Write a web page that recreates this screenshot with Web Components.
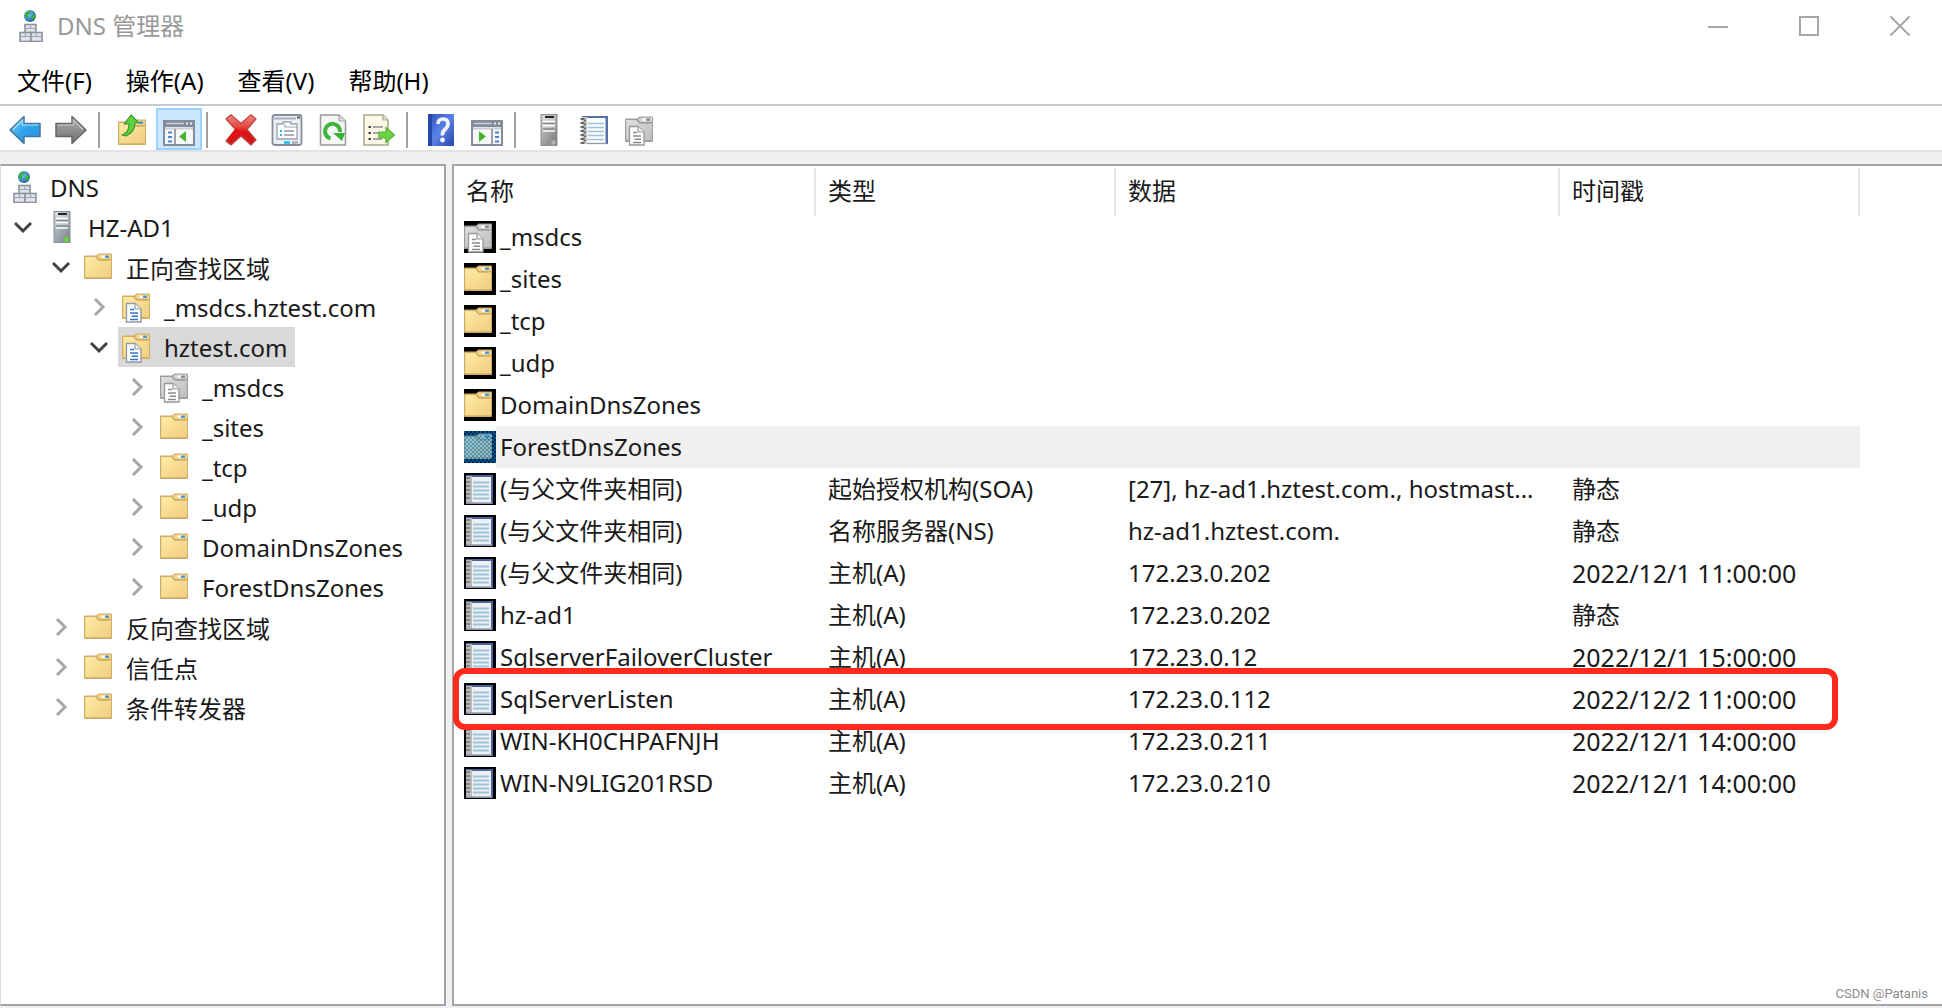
<!DOCTYPE html>
<html lang="zh-CN">
<head>
<meta charset="utf-8">
<title>DNS 管理器</title>
<style>
  html, body { margin: 0; height: 100%; }
  body {
    background: #fff;
    font-family: "Noto Sans", "Noto Sans CJK SC", sans-serif;
    font-size: 24px;
    color: #1a1a1a;
  }
</style>
</head>
<body>
<dns-window>
  <title-bar slot="title">DNS 管理器</title-bar>
  <menu-bar slot="menu"></menu-bar>
  <tool-bar slot="tools"></tool-bar>
  <scope-tree slot="tree"></scope-tree>
  <record-list slot="list"></record-list>
  <span slot="mark">CSDN @Patanis</span>
</dns-window>

<script>
const FOLDER = (a, b, c, edge, dot) => `
  <linearGradient id="f" x1="0" y1="0" x2="1" y2="1"><stop offset="0" stop-color="${a}"/><stop offset="1" stop-color="${b}"/></linearGradient>
  <path d="M0 5.500q0-1 1-1H12l2.500-2H27q1 0 1 1V27q0 1-1 1H1q-1 0-1-1z" fill="${edge}"/>
  <path d="M13 5l2-1.500H27V8H15z" fill="${c}"/>
  <rect x="17" y="4.500" width="7" height="2.500" rx="1" fill="#fff" opacity=".8"/>
  <rect x="21" y="4.500" width="4" height="2.500" rx="1" fill="${dot}"/>
  <path d="M1.200 6H11.500l3 3.500H25l2-1V26.500H1.200z" fill="url(#f)"/>
  <path d="M11.500 5.500l3 3.500H25l2-1" fill="none" stroke="${edge}" stroke-width="1"/>
  <path d="M1 27.300H27" stroke="${edge}" stroke-width="1.400"/>`;
const SHEET = (edge, ink) => `
  <path d="M4.500 12.500H13L19 18V31H4.500z" fill="#fff" stroke="${edge}" stroke-width="1.300"/>
  <path d="M13 12.500V18H19" fill="#eef1f5" stroke="${edge}" stroke-width="1.200"/>
  <path d="M8 18.500H12M8 22H16M9.500 25.300H16M8 28.500H16" stroke="${ink}" stroke-width="1.600"/>`;
const YELLOW = FOLDER('#ffeaa4', '#f0cd80', '#f1d287', '#cfac66', '#3f97d6');
const GREY = FOLDER('#e0e0e0', '#bcbcbc', '#d2d2d2', '#9c9c9c', '#8a8a8a');
const SERVER = (lamp, a, b) => `
  <linearGradient id="s" x1="0" y1="0" x2="1" y2="1"><stop offset="0" stop-color="${a}"/><stop offset="1" stop-color="${b}"/></linearGradient>
  <rect x="8" y=".5" width="16" height="31" fill="url(#s)" stroke="#8b9196" stroke-width="1"/>
  <rect x="9.500" y="1.500" width="13" height="14" fill="#fff" opacity=".35"/>
  <path d="M12 3H21" stroke="#222" stroke-width="2"/>
  <path d="M10 9.500H22M10 15H22" stroke="#84898d" stroke-width="1.500"/>
  <path d="M10 7.500H22M10 11.500H22M10 17H22" stroke="#fff" stroke-width="1.600"/>
  <rect x="18.500" y="26.500" width="4" height="4" fill="${lamp}"/>`;
const PANE = inner => `
  <rect x="1" y="7" width="30" height="24" fill="#f6f7f8" stroke="#858c99" stroke-width="2"/>
  <rect x="1" y="6" width="30" height="7" fill="#858c99"/>
  <path d="M3 9.500H21" stroke="#c9ced6" stroke-width="1.500"/>
  <path d="M23 9.500h2M27 9.500h2" stroke="#e8ecf2" stroke-width="2"/>
  <path d="M2 14.500H30" stroke="#c9ced6" stroke-width="2"/>${inner}`;
const BOX = (x, y) => `<rect x="${x}" y="${y}" width="11" height="9" fill="#dfe3ec" stroke="#8c919c" stroke-width="1.600"/><path d="M${x + 1} ${y + 4}h9M${x + 5.5} ${y + 1}v3" stroke="#9da3b0" stroke-width="1.200"/>`;

const ICONS = {
  network: `<radialGradient id="g" cx=".4" cy=".35" r=".7"><stop offset="0" stop-color="#7cc7f5"/><stop offset="1" stop-color="#1659ad"/></radialGradient>
    <circle cx="16" cy="6" r="6" fill="url(#g)"/>
    <path d="M11 4q2-3 5-3l1 2-3 2 0 3-3-1zM18 5l3-1 .5 3-2.500 3-2-2zM14 9l2 2-2 0z" fill="#3cae3b"/>
    ${BOX(11, 14.500)}${BOX(6, 22.500)}${BOX(17, 22.500)}`,
  server: SERVER('#62e01b', '#c9d2d6', '#75838a'),
  serverGrey: SERVER('#b5b5b5', '#d0d0d0', '#777'),
  folder: YELLOW,
  zone: YELLOW + SHEET('#8e98a6', '#3674c4'),
  zoneGrey: GREY + SHEET('#979797', '#8a8a8a'),
  record: `<rect x="3" y="2" width="26" height="28" fill="#566fa9"/>
    <rect x="4" y="4" width="22.500" height="26" fill="#fbfcfd"/>
    <rect x="3" y="3" width="5" height="27" fill="#c9c9c9"/>
    <path d="M8.500 9.500H25M8.500 13.500H25M8.500 17.500H25M8.500 21.500H25M8.500 25.500H25" stroke="#9cc3da" stroke-width="1.700"/>
    <path d="M8 29.500H28" stroke="#8d97ab" stroke-width="1.300"/>
    <path d="M1.500 5h4M1.500 9h4M1.500 13h4M1.500 17h4M1.500 21h4M1.500 25h4M1.500 29h4" stroke="#686868" stroke-width="2"/>
    <path d="M5 6.500h2M5 10.500h2M5 14.500h2M5 18.500h2M5 22.500h2M5 26.500h2" stroke="#666" stroke-width="1.300"/>`,
  recordMatte: `<rect x="2" y="2" width="27" height="29" fill="#4c639c"/>
    <rect x="2" y="4" width="25" height="26" fill="#eef0f3"/>
    <rect x="2" y="3" width="6" height="27" fill="#b9b9b9"/>
    <path d="M9 9.500H25M9 13.500H25M9 17.500H25M9 21.500H25M9 25.500H25" stroke="#9cc3da" stroke-width="2"/>
    <path d="M2 30H28" stroke="#9aa0ab" stroke-width="1.500"/>
    <path d="M2 5h4M2 9h4M2 13h4M2 17h4M2 21h4M2 25h4" stroke="#777" stroke-width="1.600"/>`,
  back: `<linearGradient id="b" x1="0" y1="0" x2="1" y2="1"><stop offset="0" stop-color="#7fd4fb"/><stop offset=".5" stop-color="#2fa3ea"/><stop offset="1" stop-color="#2b8fd8"/></linearGradient>
    <path d="M1 16L15 2.500V9.500H31V22.500H15V29.500z" fill="url(#b)" stroke="#41749f" stroke-width="1.500" stroke-linejoin="round"/>
    <path d="M4 15.500L13.500 6V11H29.500" fill="none" stroke="#a5e1fc" stroke-width="1.200"/>`,
  forward: `<linearGradient id="w" x1="0" y1="0" x2="0" y2="1"><stop offset="0" stop-color="#b0b0b0"/><stop offset="1" stop-color="#6f6f6f"/></linearGradient>
    <path d="M31 16L17 2.500V9.500H1V22.500H17V29.500z" fill="url(#w)" stroke="#666" stroke-width="1.500" stroke-linejoin="round"/>
    <path d="M2.500 11H18.500V6L28 15.500" fill="none" stroke="#c6c6c6" stroke-width="1.200"/>`,
  up: `<g transform="translate(1 3)">${YELLOW}</g>
    <path d="M5 21q7-2 7-11H7L14 1l8 8h-4q0 9-9 13z" fill="#5fcf3f" stroke="#3c962c" stroke-width="1.200" stroke-linejoin="round"/>`,
  treePane: PANE(`<path d="M12 15V31" stroke="#858c99" stroke-width="1.600"/><path d="M5 18.500h4M5 23h4M5 27.500h4" stroke="#4a86cf" stroke-width="2"/><path d="M23 17V28L16 22.500z" fill="#47b52c"/>`),
  actionPane: PANE(`<path d="M21 15V31" stroke="#858c99" stroke-width="1.600"/><path d="M24 18.500h4M24 23h4M24 27.500h4" stroke="#4a86cf" stroke-width="2"/><path d="M8 17V28L15 22.500z" fill="#47b52c"/>`),
  remove: `<linearGradient id="r" x1="0" y1="0" x2="0" y2="1"><stop offset="0" stop-color="#ee8b84"/><stop offset=".4" stop-color="#e8473f"/><stop offset=".55" stop-color="#e21216"/><stop offset="1" stop-color="#c41a1c"/></linearGradient>
    <path d="M1 5L6 0.800 16 9.500 26 0.800 31 5 22 15.500 31 26 26 31 16 22 6 31 1 27 10.500 15.500z" fill="url(#r)" stroke="#bb4743" stroke-width="1.200" stroke-linejoin="round"/>
    <path d="M12.500 15.500L5 25" stroke="#e21216" stroke-width="4"/>`,
  props: `<rect x="1.500" y="1" width="29" height="30" rx="2.500" fill="#eceff3" stroke="#878e99" stroke-width="1.800"/>
    <path d="M3 4.500H25" stroke="#a9b0bb" stroke-width="2"/><path d="M26 3.500h3" stroke="#555e6c" stroke-width="2"/>
    <path d="M6 10H12V8h8v2h6V25H6z" fill="#fff" stroke="#9ba2ae" stroke-width="1.300"/>
    <path d="M14 10v3h12" fill="none" stroke="#9ba2ae" stroke-width="1.200"/>
    <path d="M9 17h2M9 21h2" stroke="#33b9ea" stroke-width="1.800"/><path d="M13 17h10M13 21h10" stroke="#9096a3" stroke-width="1.500"/>
    <path d="M13 28.500h6" stroke="#19bff0" stroke-width="2.500"/><path d="M21 28.500h6" stroke="#a9b0bb" stroke-width="2.500"/>`,
  refresh: `<path d="M3.500 1H22L28.500 7V31H3.500z" fill="#f5f5f5" stroke="#9a9a9a" stroke-width="1.500"/>
    <path d="M22 1V7H28.500" fill="#ddd" stroke="#a5a5a5" stroke-width="1.200"/>
    <path d="M13.500 24.500A7.500 7.500 0 1 1 23 18" fill="none" stroke="#3cb53a" stroke-width="4"/>
    <path d="M16 19H28L25 27z" fill="#35b034"/>`,
  exportList: `<path d="M1 1H20L25 6V31H1z" fill="#fdf9e6" stroke="#aaa592" stroke-width="1.500"/>
    <path d="M20 1V6H25" fill="#e5e0cb" stroke="#aaa592" stroke-width="1.200"/>
    <path d="M5.500 13h2.500M5.500 19h2.500M5.500 25h2.500" stroke="#444" stroke-width="2"/><path d="M10 13h10M10 19h8M10 25h9" stroke="#8b8999" stroke-width="1.600"/>
    <path d="M16 18h7V13.500L31.500 21 23 28.500V24H16z" fill="#6fd445" stroke="#54b033" stroke-width="1.200"/>`,
  help: `<linearGradient id="h" x1="0" y1="0" x2="1" y2="1"><stop offset="0" stop-color="#2c4fb8"/><stop offset=".5" stop-color="#5b83e6"/><stop offset="1" stop-color="#2845a8"/></linearGradient>
    <rect x="3" y="0" width="26" height="32" fill="url(#h)"/><rect x="3" y="0" width="4" height="32" fill="#2746ae"/>
    <path d="M13 10q0-5 5-5t5 5q0 3-3 5.500t-2.500 6" fill="none" stroke="#f2f5fc" stroke-width="3.600"/>
    <circle cx="17.500" cy="26" r="2.400" fill="#f2f5fc"/>`
};

const define = (tag, css, build) => customElements.define(tag, class extends HTMLElement {
  connectedCallback() {
    if (this.shadowRoot) return;
    const t = document.createElement('template');
    t.innerHTML = `<style>:host,*{box-sizing:border-box}button{font:inherit;color:inherit;border:0;margin:0;padding:0;background:none;display:flex;align-items:center}${css}</style>${build(this)}`;
    this.attachShadow({ mode: 'open' }).append(t.content.cloneNode(true));
  }
});

/* 32px icon; "matte" paints the opaque black backing, "picked" the selection dither */
define('mmc-icon', `
  :host { display: block; flex: none; width: 32px; height: 32px; }
  :host([matte]) { background: #000; }
  svg { display: block; width: 100%; height: 100%; }`,
  el => `<svg viewBox="0 0 32 32" aria-hidden="true">${ICONS[el.getAttribute('name')]}${el.hasAttribute('picked')
    ? '<pattern id="d" width="4" height="4" patternUnits="userSpaceOnUse"><path d="M0 0h2v2H0zM2 2h2v2H2z" fill="#0078d7"/></pattern><rect width="32" height="32" fill="#0078d7" opacity=".3"/><rect width="32" height="32" fill="url(#d)" opacity=".6"/>' : ''}</svg>`);

define('dns-window', `
  :host { display: flex; flex-direction: column; position: relative; min-height: 100vh; background: #f0f0f0; }
  .panes { flex: 1; display: flex; gap: 6px; padding: 12px 0 2px; }
  ::slotted([slot=tree]) { flex: 0 0 446px; }
  ::slotted([slot=list]) { flex: 1; min-width: 0; }
  .mark { position: absolute; right: 14px; bottom: 6px; font: 13px/16px Roboto, sans-serif; color: #8c8c8c; }`,
  () => `<slot name="title"></slot><slot name="menu"></slot><slot name="tools"></slot>
    <main class="panes"><slot name="tree"></slot><slot name="list"></slot></main>
    <div class="mark"><slot name="mark"></slot></div>`);

define('title-bar', `
  :host { display: flex; align-items: center; gap: 11px; height: 52px; padding-left: 14px; background: #fff; color: #999; }
  h1 { flex: 1; margin: 0; font: inherit; line-height: 52px; }
  .controls { display: flex; gap: 7px; }
  .controls button { width: 84px; height: 52px; justify-content: center; }
  svg { width: 22px; height: 22px; fill: none; stroke: #a6a6a6; stroke-width: 2; }`,
  () => {
    const b = (name, d) => `<button type="button" aria-label="${name}"><svg viewBox="0 0 22 22">${d}</svg></button>`;
    return `<mmc-icon name="network"></mmc-icon><h1><slot></slot></h1><div class="controls">
      ${b('最小化', '<path d="M1 12H21"/>')}${b('最大化', '<rect x="2" y="2" width="18" height="18"/>')}${b('关闭', '<path d="M1.500 1.500L20.500 20.500M20.500 1.500L1.500 20.500"/>')}</div>`;
  });

define('menu-bar', `
  :host { display: flex; height: 54px; background: #fff; border-bottom: 2px solid #c8c8c8; color: #000; }
  button { height: 52px; padding: 2px 17px 0; }`,
  () => ['文件(F)', '操作(A)', '查看(V)', '帮助(H)'].map(t => `<button type="button">${t}</button>`).join(''));

define('tool-bar', `
  :host { display: flex; align-items: flex-end; height: 46px; padding-left: 2px; background: #fff; border-bottom: 2px solid #e2e2e2; }
  button { width: 46px; height: 42px; padding-top: 2px; justify-content: center; }
  button[aria-pressed=true] { background: #cce8ff; box-shadow: inset 0 0 0 2px #99d1ff; }
  .sep { width: 2px; height: 36px; margin: 0 10px 2px 4px; background: #a0a0a0; }`,
  () => [['back', '后退'], ['forward', '前进'], 0, ['up', '向上一级'], ['treePane', '显示/隐藏控制台树', 1], 0,
    ['remove', '删除'], ['props', '属性'], ['refresh', '刷新'], ['exportList', '导出列表'], 0,
    ['help', '帮助'], ['actionPane', '显示/隐藏操作窗格'], 0, ['serverGrey', '新建服务器'], ['record', '新建记录'], ['zoneGrey', '新建区域']]
    .map(i => i ? `<button type="button" aria-label="${i[1]}"${i[2] ? ' aria-pressed="true"' : ''}><mmc-icon name="${i[0]}"></mmc-icon></button>` : '<span class="sep"></span>').join(''));

define('tree-node', `
  :host { display: flex; height: 40px; padding-left: calc((var(--level) - 1) * 38px + 8px); }
  :host([level="0"]) { padding-left: 4px; }
  .toggle { width: 34px; padding-left: 6px; }
  .toggle svg { width: 18px; height: 18px; fill: none; stroke: #a6a6a6; stroke-width: 3; }
  .toggle[aria-expanded=true] svg { stroke: #404040; }
  .item { gap: 10px; padding: 0 8px 0 4px; white-space: nowrap; }
  :host([selected]) .item { background: #d9d9d9; }`,
  el => {
    const open = el.hasAttribute('open');
    el.style.setProperty('--level', el.getAttribute('level'));
    return `${el.getAttribute('level') === '0' ? '' : `<button type="button" class="toggle" aria-label="展开或折叠" aria-expanded="${open}"><svg viewBox="0 0 18 18"><path d="${open ? 'M1 5L9 13 17 5' : 'M5 1L13 9 5 17'}"/></svg></button>`}
    <button type="button" class="item"><mmc-icon name="${el.getAttribute('icon')}"></mmc-icon><span><slot></slot></span></button>`;
  });

define('scope-tree', `
  :host { display: block; background: #fff; border: 2px solid #a0a5ad; border-left: 1px solid #dcdcdc; padding-top: 1px; }
  nav { margin-left: -1px; }`,
  () => `<nav>${[[0, 'network', 'DNS'], [1, 'server', 'HZ-AD1', 'open'], [2, 'folder', '正向查找区域', 'open'],
    [3, 'zone', '_msdcs.hztest.com'], [3, 'zone', 'hztest.com', 'open selected'],
    [4, 'zoneGrey', '_msdcs'], [4, 'folder', '_sites'], [4, 'folder', '_tcp'], [4, 'folder', '_udp'],
    [4, 'folder', 'DomainDnsZones'], [4, 'folder', 'ForestDnsZones'],
    [2, 'folder', '反向查找区域'], [2, 'folder', '信任点'], [2, 'folder', '条件转发器']]
    .map(n => `<tree-node level="${n[0]}" icon="${n[1]}" ${n[3] || ''}>${n[2]}</tree-node>`).join('')}</nav>`);

define('record-list', `
  :host { display: block; background: #fff; border: 2px solid #a0a5ad; border-right: 0; }
  table { table-layout: fixed; width: 1406px; border-collapse: separate; border-spacing: 0; }
  .col-name { width: 362px; } .col-type { width: 300px; } .col-data { width: 444px; } .col-time { width: 300px; }
  th { height: 50px; padding: 2px 0 0; text-align: left; font-weight: 400; }
  th span { display: block; height: 48px; padding-left: 12px; line-height: 46px; border-right: 2px solid #e8e8e8; }
  td { height: 42px; padding: 0 0 0 12px; line-height: 40px; white-space: nowrap; }
  td:first-child { padding-left: 10px; }
  td.stamp { font-size: 25px; }
  .entry { display: flex; align-items: center; gap: 4px; }
  tr.hot td { background: #f0f0f0; }
  tr.hot td:first-child { background: linear-gradient(to right, #fff 42px, #f0f0f0 42px); }
  tr.marked { position: relative; }
  .frame { position: absolute; left: -1px; right: 22px; top: -10px; bottom: -10px; border: 6px solid #ff2a1c; border-radius: 12px; pointer-events: none; }`,
  () => {
    const P = '(与父文件夹相同)', A = '主机(A)', S = '静态', R = 'recordMatte';
    const rows = [['zoneGrey', '_msdcs'], ['folder', '_sites'], ['folder', '_tcp'], ['folder', '_udp'], ['folder', 'DomainDnsZones'],
      ['folder', 'ForestDnsZones', '', '', '', 'hot'],
      [R, P, '起始授权机构(SOA)', '[27], hz-ad1.hztest.com., hostmast...', S],
      [R, P, '名称服务器(NS)', 'hz-ad1.hztest.com.', S],
      [R, P, A, '172.23.0.202', '2022/12/1 11:00:00'],
      [R, 'hz-ad1', A, '172.23.0.202', S],
      [R, 'SqlserverFailoverCluster', A, '172.23.0.12', '2022/12/1 15:00:00'],
      [R, 'SqlServerListen', A, '172.23.0.112', '2022/12/2 11:00:00', 'marked'],
      [R, 'WIN-KH0CHPAFNJH', A, '172.23.0.211', '2022/12/1 14:00:00'],
      [R, 'WIN-N9LIG201RSD', A, '172.23.0.210', '2022/12/1 14:00:00']];
    return `<table><colgroup><col class="col-name"><col class="col-type"><col class="col-data"><col class="col-time"></colgroup>
      <thead><tr>${['名称', '类型', '数据', '时间戳'].map(h => `<th scope="col"><span>${h}</span></th>`).join('')}</tr></thead>
      <tbody>${rows.map(([icon, name, type = '', data = '', time = '', cls = '']) => `<tr class="${cls}">
        <td><div class="entry"><mmc-icon matte name="${icon}"${cls === 'hot' ? ' picked' : ''}></mmc-icon><span>${name}</span></div></td>
        <td>${type}</td><td>${data}</td><td${time && time !== S ? ' class="stamp"' : ''}>${time}${cls === 'marked' ? '<span class="frame"></span>' : ''}</td></tr>`).join('')}</tbody></table>`;
  });
</script>
</body>
</html>
